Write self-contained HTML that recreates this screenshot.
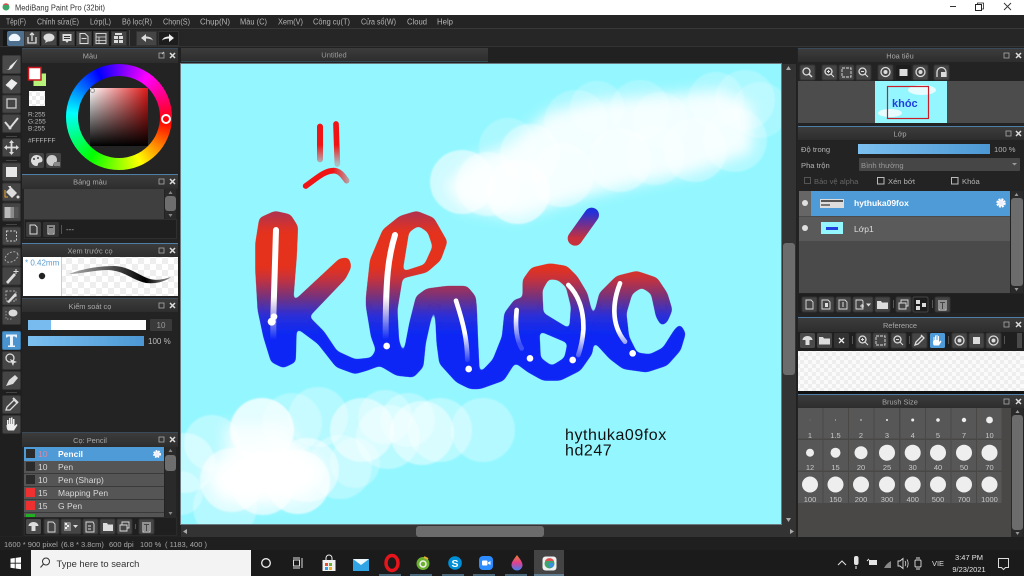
<!DOCTYPE html>
<html lang="vi"><head><meta charset="utf-8"><title>MediBang Paint Pro</title>
<style>
html,body{margin:0;padding:0;background:#222}
body{width:1024px;height:576px;overflow:hidden;position:relative;font-family:"Liberation Sans","Noto Sans CJK SC",sans-serif}
svg{position:absolute;left:0;top:0}
text{font-family:"Liberation Sans","Noto Sans CJK SC",sans-serif;fill:#b4b4b4;font-size:7.6px}
.m{text-anchor:middle}
.h{fill:#a8a8a8;font-size:7.4px;text-anchor:middle}
.l{fill:#d8d8d8;font-size:8.5px}
.s{fill:#c8c8c8;font-size:7.5px;text-anchor:middle}
.b{fill:#454545;stroke:#333}
.w{fill:#dcdcdc}
.o{fill:none;stroke:#dcdcdc;stroke-width:1.3}
.d{position:absolute}
</style></head><body>
<svg width="1024" height="576" viewBox="0 0 1024 576">
<defs>
<linearGradient id="hd" x1="0" y1="0" x2="0" y2="1"><stop offset="0" stop-color="#3c3c3c"/><stop offset="1" stop-color="#2d2d2d"/></linearGradient>
<linearGradient id="bar" x1="0" y1="0" x2="1" y2="0"><stop offset="0" stop-color="#7cc0f0"/><stop offset="1" stop-color="#4c98d4"/></linearGradient>
<pattern id="chk" width="8" height="8" patternUnits="userSpaceOnUse"><rect width="8" height="8" fill="#fff"/><rect width="4" height="4" fill="#ececec"/><rect x="4" y="4" width="4" height="4" fill="#ececec"/></pattern>
<pattern id="chk2" width="12" height="12" patternUnits="userSpaceOnUse"><rect width="12" height="12" fill="#fff"/><rect width="6" height="6" fill="#cfcfcf"/><rect x="6" y="6" width="6" height="6" fill="#cfcfcf"/></pattern>
<linearGradient id="stk" x1="0" y1="0" x2="1" y2="0"><stop offset="0" stop-color="#aaa"/><stop offset=".4" stop-color="#555"/><stop offset=".75" stop-color="#000"/><stop offset="1" stop-color="#999"/></linearGradient>
<linearGradient id="ink" gradientUnits="userSpaceOnUse" x1="0" y1="306" x2="0" y2="675">
<stop offset="0" stop-color="#ad3050"/><stop offset=".16" stop-color="#e4301f"/><stop offset=".455" stop-color="#e4301f"/><stop offset=".553" stop-color="#c03040"/><stop offset=".70" stop-color="#703080"/><stop offset=".84" stop-color="#2a2fd8"/><stop offset="1" stop-color="#0a28f5"/></linearGradient>
<linearGradient id="acc" gradientUnits="userSpaceOnUse" x1="0" y1="305" x2="0" y2="385"><stop offset="0" stop-color="#2030dc"/><stop offset="1" stop-color="#c8303c"/></linearGradient>
<linearGradient id="f1" gradientUnits="userSpaceOnUse" x1="0" y1="560" x2="0" y2="690"><stop offset="0" stop-color="#fff"/><stop offset="1" stop-color="#fff" stop-opacity="0"/></linearGradient>
<linearGradient id="f2" gradientUnits="userSpaceOnUse" x1="0" y1="620" x2="0" y2="700"><stop offset="0" stop-color="#fff"/><stop offset="1" stop-color="#fff" stop-opacity=".2"/></linearGradient>
<linearGradient id="f3" gradientUnits="userSpaceOnUse" x1="0" y1="670" x2="0" y2="755"><stop offset="0" stop-color="#fff"/><stop offset="1" stop-color="#fff" stop-opacity=".1"/></linearGradient>
<linearGradient id="f4" gradientUnits="userSpaceOnUse" x1="0" y1="660" x2="0" y2="740"><stop offset="0" stop-color="#fff"/><stop offset="1" stop-color="#fff" stop-opacity=".15"/></linearGradient>
<linearGradient id="dr1" gradientUnits="userSpaceOnUse" x1="0" y1="105" x2="0" y2="162"><stop offset="0" stop-color="#f01414"/><stop offset="1" stop-color="#f01414" stop-opacity=".25"/></linearGradient>
<linearGradient id="fr" gradientUnits="userSpaceOnUse" x1="280" y1="0" x2="328" y2="0"><stop offset="0" stop-color="#f01414"/><stop offset="1" stop-color="#f01414" stop-opacity=".35"/></linearGradient>
<linearGradient id="drop" x1="0" y1="0" x2="0" y2="1"><stop offset="0" stop-color="#f08030"/><stop offset=".5" stop-color="#e04090"/><stop offset="1" stop-color="#4080f0"/></linearGradient>
<clipPath id="cv"><rect x="181" y="64" width="600" height="460"/></clipPath>
<filter id="sm" x="-5%" y="-5%" width="110%" height="110%"><feGaussianBlur stdDeviation="7"/><feComponentTransfer><feFuncA type="linear" slope="9" intercept="-3.8"/></feComponentTransfer></filter>
<filter id="bl" x="-10%" y="-10%" width="120%" height="120%"><feGaussianBlur stdDeviation=".8"/></filter>
<filter id="core" x="-20%" y="-20%" width="140%" height="140%"><feGaussianBlur stdDeviation="7"/></filter>
</defs>

<!-- base -->
<rect width="1024" height="576" fill="#232323"/>
<rect width="1024" height="15" fill="#fff"/>
<circle cx="6" cy="7" r="3.5" fill="#3fa46a"/><path d="M3 5a3.5 3.5 0 0 1 6 0z" fill="#d85050"/>
<text x="15" y="10.5" textLength="90" lengthAdjust="spacingAndGlyphs" style="font-size:8.6px;fill:#333">MediBang Paint Pro (32bit)</text>
<path d="M950 6.5h6" stroke="#333"/><rect x="975.5" y="4.5" width="6" height="6" fill="none" stroke="#222"/><path d="M977.5 4.5v-1.5h6v6h-2" fill="none" stroke="#222" stroke-width=".8"/><path d="M1004 3l7 7M1011 3l-7 7" stroke="#333" stroke-width=".9"/>

<!-- menu -->
<rect y="15" width="1024" height="13" fill="#242424"/>
<g style="fill:#b8b8b8;font-size:8px"><text x="6" y="24.5" textLength="20" lengthAdjust="spacingAndGlyphs" style="font-size:8px">Tệp(F)</text><text x="37" y="24.5" textLength="42" lengthAdjust="spacingAndGlyphs" style="font-size:8px">Chỉnh sửa(E)</text><text x="90" y="24.5" textLength="21" lengthAdjust="spacingAndGlyphs" style="font-size:8px">Lớp(L)</text><text x="122" y="24.5" textLength="30" lengthAdjust="spacingAndGlyphs" style="font-size:8px">Bộ lọc(R)</text><text x="163" y="24.5" textLength="27" lengthAdjust="spacingAndGlyphs" style="font-size:8px">Chọn(S)</text><text x="200" y="24.5" textLength="30" lengthAdjust="spacingAndGlyphs" style="font-size:8px">Chụp(N)</text><text x="240" y="24.5" textLength="27" lengthAdjust="spacingAndGlyphs" style="font-size:8px">Màu (C)</text><text x="278" y="24.5" textLength="25" lengthAdjust="spacingAndGlyphs" style="font-size:8px">Xem(V)</text><text x="313" y="24.5" textLength="37" lengthAdjust="spacingAndGlyphs" style="font-size:8px">Công cụ(T)</text><text x="361" y="24.5" textLength="35" lengthAdjust="spacingAndGlyphs" style="font-size:8px">Cửa sổ(W)</text><text x="407" y="24.5" textLength="20" lengthAdjust="spacingAndGlyphs" style="font-size:8px">Cloud</text><text x="437" y="24.5" textLength="16" lengthAdjust="spacingAndGlyphs" style="font-size:8px">Help</text></g>
<rect y="28" width="1024" height="1" fill="#383838"/>
<rect y="29" width="1024" height="18" fill="#262626"/>
<rect y="46" width="1024" height="1" fill="#333"/>
<rect x="3" y="30" width="124" height="16" fill="#161616"/>
<rect x="7" y="31" width="18" height="15" rx="2" fill="#4e6f8e"/>
<path d="M10 41a3 3 0 0 1 0-5 5 4 0 0 1 9 0 3 3 0 0 1 0 5z" fill="#f0f6ff"/>
<rect x="24.5" y="31.5" width="15" height="14" class="b"/><path d="M28 37h-0v6h8v-6M32 41v-8m-2 2l2-2 2 2" class="o"/>
<rect x="41.5" y="31.5" width="15" height="14" class="b"/><ellipse cx="49" cy="37.5" rx="5.5" ry="4" class="w"/><path d="M46 40l-1 3 4-2z" class="w"/>
<rect x="59.5" y="31.5" width="15" height="14" class="b"/><path d="M62.5 34h9v7h-3l-1.5 2-1.5-2h-3z" class="w"/><path d="M64 36.5h6M64 38.5h6" stroke="#333"/>
<rect x="76.5" y="31.5" width="15" height="14" class="b"/><path d="M80 33.5h5l3 3v7h-8z" class="o" style="stroke-width:1"/><path d="M81.5 38.5h5" stroke="#ddd"/>
<rect x="93.5" y="31.5" width="15" height="14" class="b"/><rect x="96" y="33.5" width="10" height="10" class="o" style="stroke-width:.9"/><path d="M96 37h10M96 40.5h10M99 37v7" stroke="#ddd" stroke-width=".8"/>
<rect x="111.5" y="31.5" width="15" height="14" class="b"/><path d="M114 36h4v3h-4zM119 36h4v3h-4zM114 40h4v3h-4zM119 40h4v3h-4zM115 33h7v2h-7z" class="w"/>
<rect x="129" y="30" width="1" height="16" fill="#444"/>
<rect x="136.5" y="31.5" width="20" height="14" class="b"/><path d="M141 38l5-4v2.5c3 0 6 1 7 4-2-1.5-4-2-7-2v3.5z" class="w"/>
<rect x="158.5" y="31.5" width="20" height="14" fill="#1d1d1d" stroke="#333"/><path d="M174 38l-5-4v2.5c-3 0-6 1-7 4 2-1.5 4-2 7-2v3.5z" fill="#f0f0f0"/>

<!-- left tool column -->
<rect y="47" width="22" height="489" fill="#1f1f1f"/>
<g>
<rect x="2.5" y="55.5" width="18" height="18" rx="1.5" fill="#4a4a4a" stroke="#383838"/><path d="M6 70c3 0 3-2 4-4l8-7-6 9c-2 2-4 2-6 2z" fill="#e8e8e8"/>
<rect x="2.5" y="75.5" width="18" height="18" rx="1.5" class="b"/><path d="M5.5 85l6-6 6 4-6 7z" fill="#eee"/><path d="M8 87l3 3" stroke="#777"/>
<rect x="2.5" y="95" width="18" height="18" rx="1.5" class="b"/><rect x="7" y="99" width="9" height="9" class="o" style="stroke:#ccc"/>
<rect x="2.5" y="114.5" width="18" height="18" rx="1.5" class="b"/><path d="M5 122l5 6 8-10" class="o" style="stroke-width:2"/><circle cx="10" cy="128" r="1.5" class="w"/>
<rect x="6" y="136" width="11" height="1" fill="#444"/>
<rect x="2.5" y="138.5" width="18" height="18" rx="1.5" class="b"/><path d="M11.5 141v13M5 147.5h13" stroke="#ddd" stroke-width="1.8"/><path d="M11.5 140l-2.5 3h5zM11.5 155l-2.5-3h5zM4 147.5l3-2.5v5zM19 147.5l-3-2.5v5z" class="w"/>
<rect x="6" y="160" width="11" height="1" fill="#444"/>
<rect x="2.5" y="163" width="18" height="18" rx="1.5" class="b"/><rect x="6" y="167" width="11" height="10" fill="#e8e8e8"/>
<rect x="2.5" y="183" width="18" height="18" rx="1.5" class="b"/><path d="M6 192l5-5 6 6-5 5zM8 186l3 0 0 4" fill="#ddd"/><path d="M5 190v7h3" stroke="#f0a830" fill="none"/><circle cx="18" cy="197" r="1.5" fill="#ddd"/>
<rect x="2.5" y="203" width="18" height="18" rx="1.5" class="b"/><rect x="4.5" y="207" width="14" height="11" fill="#8a8a8a"/><rect x="4.5" y="207" width="6" height="11" fill="#bbb"/><rect x="14" y="207" width="4.5" height="11" fill="#555"/>
<rect x="6" y="224" width="11" height="1" fill="#444"/>
<rect x="2.5" y="227" width="18" height="18" rx="1.5" class="b"/><rect x="6.5" y="231" width="10" height="10" fill="none" stroke="#ccc" stroke-dasharray="2 1.5"/>
<rect x="2.5" y="248" width="18" height="18" rx="1.5" class="b"/><ellipse cx="11.5" cy="257" rx="7" ry="4.5" fill="none" stroke="#aaa" stroke-dasharray="2 1.5" transform="rotate(-30 11.5 257)"/>
<rect x="2.5" y="267" width="18" height="18" rx="1.5" class="b"/><path d="M6 282l8-9 2 2-8 9z" class="w"/><path d="M16 269v5M13.5 271.5h5" stroke="#ddd"/>
<rect x="2.5" y="287" width="18" height="18" rx="1.5" class="b"/><rect x="6" y="291" width="10" height="10" fill="none" stroke="#aaa" stroke-dasharray="2 1.5"/><path d="M7 302l8-9 2 2-8 8z" class="w"/>
<rect x="2.5" y="306.5" width="18" height="18" rx="1.5" class="b"/><ellipse cx="13" cy="313" rx="4.5" ry="3.5" class="w"/><path d="M6 311v8h7" fill="none" stroke="#999" stroke-dasharray="1.5 1.5"/>
<rect x="2.5" y="331.5" width="18" height="18" rx="1.5" fill="#4a94d0" stroke="#3a78a8"/><path d="M6 334.5h11v3h-1l-1-1h-2v9h2v1.5h-7v-1.5h2v-9h-2l-1 1h-1z" fill="#eaf4ff"/>
<rect x="2.5" y="351.5" width="18" height="18" rx="1.5" class="b"/><circle cx="10" cy="358" r="4" class="o"/><path d="M10 359l7 3-3 1-1 3z" class="w"/>
<rect x="2.5" y="371.5" width="18" height="18" rx="1.5" class="b"/><path d="M6 386l3-6 6-5 3 3-5 6z" class="w"/>
<rect x="6" y="392" width="11" height="1" fill="#444"/>
<rect x="2.5" y="395.5" width="18" height="18" rx="1.5" class="b"/><path d="M6 410l1-3 7-7 3 3-7 7z" fill="none" stroke="#ddd" stroke-width="1.3"/><path d="M13 398l5 5" stroke="#ddd" stroke-width="2"/>
<rect x="2.5" y="415.5" width="18" height="18" rx="1.5" class="b"/><path d="M7 425v-5h1.5v4h.5v-6h1.5v6h.5v-6.5h1.5v6.5h.5v-5h1.5v7l2-2 1 1-3.5 5.5h-6c-1-1-1.5-3-1.5-5.5z" fill="#eee"/>
</g>

<!-- left panels -->
<rect x="22" y="48" width="156" height="488" fill="#232323"/>
<rect x="22" y="48" width="156" height="1" fill="#3a4a58"/>
<rect x="22" y="49" width="156" height="14" fill="url(#hd)"/>
<text class="h" x="90" y="58.5">Màu</text>
<rect x="159" y="53" width="5" height="5" fill="none" stroke="#aaa" stroke-width=".8"/><path d="M164 52l-2 2" stroke="#ccc"/><path d="M170 53l5 5M175 53l-5 5" stroke="#ddd" stroke-width="1.5"/>
<rect x="33.5" y="73.5" width="12.5" height="12.5" fill="#b8f47a"/>
<rect x="28.5" y="67.5" width="12.5" height="12.5" fill="#fff" stroke="#c8161c" stroke-width="1.5"/>
<rect x="29" y="91" width="16" height="15" fill="url(#chk)"/>
<text x="28" y="116.5" style="font-size:6.5px;fill:#bbb">R:255</text><text x="28" y="123.5" style="font-size:6.5px;fill:#bbb">G:255</text><text x="28" y="130.5" style="font-size:6.5px;fill:#bbb">B:255</text>
<text x="28" y="142.5" style="font-size:6.5px;fill:#bbb">#FFFFFF</text>
<rect x="29" y="153" width="15" height="15" rx="2" fill="#444"/><path d="M36.5 155a5.5 5.5 0 1 0 0 11c2 0 1-2 2-3s4 0 4-3c0-3-3-5-6-5z" class="w"/><circle cx="34" cy="159" r="1" fill="#444"/><circle cx="38" cy="158" r="1" fill="#444"/>
<rect x="46" y="153" width="15" height="15" rx="2" fill="#444"/><path d="M52 155a5.5 5.5 0 1 0 0 11c2 0 1-2 2-3s3 0 3-3c0-3-2-5-5-5z" fill="#ccc"/><rect x="54" y="162" width="6" height="4" fill="#888"/>

<rect x="22" y="174" width="156" height="1" fill="#4f7ea6"/>
<rect x="22" y="175" width="156" height="14" fill="url(#hd)"/>
<text class="h" x="90" y="184.5">Bảng màu</text>
<rect x="159" y="179" width="5" height="5" fill="none" stroke="#aaa" stroke-width=".8"/><path d="M170 179l5 5M175 179l-5 5" stroke="#ddd" stroke-width="1.5"/>
<rect x="24" y="189" width="140" height="30" fill="#3f3f3f"/>
<rect x="165" y="189" width="11" height="30" fill="#2a2a2a"/><rect x="165" y="196" width="11" height="15" rx="3" fill="#6e6e6e"/><path d="M170.5 191l-2 3h4zM170.5 217l-2-3h4z" fill="#888"/>
<rect x="24.5" y="219.5" width="152" height="19" fill="#1f1f1f" stroke="#2f2f2f"/>
<rect x="26" y="222" width="15" height="15" rx="1.5" fill="#3d3d3d"/><path d="M30 225h5l2 2v7h-7z" class="o" style="stroke-width:1"/>
<rect x="43" y="222" width="16" height="15" rx="1.5" fill="#333"/><path d="M47 226h8M48 227v7h6v-7M50 228v5M52 228v5" stroke="#ddd" fill="none"/>
<rect x="61" y="225" width="1" height="9" fill="#555"/><text x="66" y="232" style="font-size:8px">---</text>

<rect x="22" y="243" width="156" height="1" fill="#4f7ea6"/>
<rect x="22" y="244" width="156" height="13" fill="url(#hd)"/>
<text class="h" x="90" y="253.5">Xem trước cọ</text>
<rect x="159" y="248" width="5" height="5" fill="none" stroke="#aaa" stroke-width=".8"/><path d="M170 248l5 5M175 248l-5 5" stroke="#ddd" stroke-width="1.5"/>
<rect x="23" y="257" width="155" height="39" fill="#fff"/>
<rect x="62" y="257" width="116" height="39" fill="url(#chk2)" opacity=".35"/><rect x="61" y="257" width="1" height="39" fill="#ccc"/>
<text x="25" y="265.5" style="font-size:8px;fill:#5c9ccc">* 0.42mm</text>
<circle cx="42" cy="276" r="3.2" fill="#222"/>
<path d="M69 274C85 268 100 266 115 266 130 267 140 276 150 279 158 281 164 279 171 277 165 282 155 284 146 283 130 279 125 271 108 270 95 270 80 274 69 274z" fill="url(#stk)"/>

<rect x="22" y="298" width="156" height="1" fill="#3a4a58"/>
<rect x="22" y="299" width="156" height="13" fill="url(#hd)"/>
<text class="h" x="90" y="309">Kiểm soát cọ</text>
<rect x="159" y="303" width="5" height="5" fill="none" stroke="#aaa" stroke-width=".8"/><path d="M170 303l5 5M175 303l-5 5" stroke="#ddd" stroke-width="1.5"/>
<rect x="28" y="320" width="118" height="10" fill="#fff"/><rect x="28" y="320" width="23" height="10" fill="#78bbee"/>
<rect x="150" y="319" width="22" height="12" rx="1" fill="#3a3a3a"/><text x="161" y="328" class="m" style="font-size:8px;fill:#999">10</text>
<rect x="28" y="336" width="116" height="10" fill="url(#bar)"/>
<text x="148" y="344" style="font-size:8px;fill:#bbb">100 %</text>

<rect x="22" y="432" width="156" height="1" fill="#3a4a58"/>
<rect x="22" y="433" width="156" height="14" fill="url(#hd)"/>
<text class="h" x="90" y="443">Cọ: Pencil</text>
<rect x="159" y="437" width="5" height="5" fill="none" stroke="#aaa" stroke-width=".8"/><path d="M170 437l5 5M175 437l-5 5" stroke="#ddd" stroke-width="1.5"/>
<rect x="24" y="447" width="140" height="70" fill="#555"/>
<rect x="24" y="447" width="140" height="14" fill="#4f9bd8"/>
<path d="M24 473.5h140M24 486.5h140M24 499.5h140M24 512.5h140" stroke="#3a3a3a"/>
<rect x="26" y="449" width="9" height="9" fill="#2b2b2b"/><rect x="26" y="462" width="9" height="9" fill="#2b2b2b"/><rect x="26" y="475" width="9" height="9" fill="#2b2b2b"/><rect x="26" y="488" width="9" height="9" fill="#f03030"/><rect x="26" y="501" width="9" height="9" fill="#f03030"/><rect x="26" y="514" width="9" height="3" fill="#20b020"/>
<text x="38" y="457" style="font-size:8.5px;fill:#d88aa0">10</text><text x="58" y="457" style="font-size:8.5px;fill:#fff;font-weight:bold">Pencil</text>
<text x="38" y="470" class="l">10</text><text x="58" y="470" class="l">Pen</text>
<text x="38" y="483" class="l">10</text><text x="58" y="483" class="l">Pen (Sharp)</text>
<text x="38" y="496" class="l">15</text><text x="58" y="496" class="l">Mapping Pen</text>
<text x="38" y="509" class="l">15</text><text x="58" y="509" class="l">G Pen</text>
<circle cx="157" cy="454" r="3" fill="#eef" stroke="#fff" stroke-width="2" stroke-dasharray="1.5 1"/>
<rect x="165" y="447" width="11" height="70" fill="#2a2a2a"/><rect x="165" y="455" width="11" height="16" rx="3" fill="#6e6e6e"/><path d="M170.5 449l-2 3h4zM170.5 515l-2-3h4z" fill="#888"/>
<rect x="24.5" y="517.5" width="152" height="18" fill="#1f1f1f" stroke="#2a2a2a"/>
<rect x="26" y="519" width="15" height="15" rx="1.5" fill="#4a4a4a"/><path d="M33.5 522c-3 0-5 2-5 4h3v5h4v-5h3c0-2-2-4-5-4z" class="w"/>
<rect x="44" y="519" width="15" height="15" rx="1.5" class="b"/><path d="M48 522h5l2 2v8h-7z" class="o" style="stroke-width:.9"/>
<rect x="61" y="519" width="20" height="15" rx="1.5" class="b"/><path d="M64 522h6l1 1v8h-7z" fill="#888"/><path d="M65 523h2v2h-2zM67 525h2v2h-2zM65 527h2v2h-2z" fill="#eee"/><path d="M73 525h5l-2.5 3z" class="w"/>
<rect x="83" y="519" width="15" height="15" rx="1.5" class="b"/><path d="M86 522h7l1 2v8h-8z" class="o" style="stroke-width:.9"/><path d="M88 526h3M88 529h3" stroke="#ddd"/>
<rect x="100" y="519" width="15" height="15" rx="1.5" class="b"/><path d="M103 523h4l1 1.5h5v6.5h-10z" class="w"/>
<rect x="117" y="519" width="15" height="15" rx="1.5" class="b"/><path d="M120 525h7v6h-7zM122 525v-3h7v6h-2" class="o" style="stroke-width:.9"/>
<rect x="135" y="524" width="1" height="5" fill="#555"/>
<rect x="139" y="519" width="15" height="15" rx="1.5" class="b"/><path d="M142 523h9M143 524v8h7v-8M145 525v6M148 525v6" stroke="#ddd" fill="none"/>

<!-- canvas region -->
<rect x="178" y="47" width="620" height="489" fill="#212121"/>
<rect x="181" y="48" width="307" height="13" fill="url(#hd)"/>
<rect x="181" y="61" width="307" height="1" fill="#2f4a50"/>
<text x="334" y="57.5" class="m" style="font-size:7.5px;fill:#9a9a9a">Untitled</text>
<rect x="180" y="63" width="602" height="462" fill="#6a7a80"/>
<rect x="181" y="64" width="600" height="460" fill="#94f7ff"/>

<g clip-path="url(#cv)">
<g fill="#fff" filter="url(#bl)">
<circle cx="462" cy="182" r="32" opacity=".55"/><circle cx="508" cy="147" r="29" opacity=".22"/><circle cx="530" cy="154" r="30" opacity=".35"/><circle cx="518" cy="192" r="32" opacity=".6"/><circle cx="576" cy="122" r="32" opacity=".22"/><circle cx="597" cy="108" r="27" opacity=".2"/><circle cx="640" cy="110" r="30" opacity=".2"/><circle cx="620" cy="160" r="32" opacity=".35"/><circle cx="562" cy="175" r="32" opacity=".4"/><circle cx="695" cy="150" r="32" opacity=".3"/><circle cx="716" cy="100" r="28" opacity=".22"/><circle cx="745" cy="100" r="30" opacity=".22"/><circle cx="760" cy="110" r="28" opacity=".2"/><circle cx="735" cy="140" r="32" opacity=".25"/><circle cx="655" cy="155" r="30" opacity=".25"/><circle cx="488" cy="184" r="32" opacity=".4"/><circle cx="660" cy="120" r="28" opacity=".2"/>
<circle cx="212" cy="443" r="28" opacity=".35"/><circle cx="185" cy="463" r="30" opacity=".4"/><circle cx="181" cy="493" r="22" opacity=".3"/><circle cx="225" cy="507" r="32" opacity=".3"/><circle cx="318" cy="417" r="30" opacity=".3"/><circle cx="292" cy="423" r="30" opacity=".25"/><circle cx="362" cy="430" r="32" opacity=".5"/><circle cx="385" cy="417" r="27" opacity=".3"/><circle cx="408" cy="420" r="27" opacity=".3"/><circle cx="388" cy="437" r="32" opacity=".35"/><circle cx="422" cy="433" r="32" opacity=".45"/><circle cx="440" cy="430" r="32" opacity=".35"/><circle cx="483" cy="430" r="32" opacity=".3"/><circle cx="340" cy="467" r="32" opacity=".3"/><circle cx="355" cy="463" r="25" opacity=".25"/><circle cx="262" cy="430" r="32" opacity=".75"/>
</g>
<g fill="#fff" filter="url(#core)">
<path d="M445 186 470 160 510 145 548 112 600 100 660 95 720 90 752 105 752 152 695 172 628 186 565 202 515 218 462 208Z" opacity=".85"/>
<path d="M205 470 240 450 300 445 325 470 310 495 265 505 220 500Z"/>
<path d="M225 425 290 425 300 460 225 465Z" opacity=".7"/>
</g>
<g fill="#fff" filter="url(#bl)">
<circle cx="232" cy="480" r="32" opacity=".55"/><circle cx="263" cy="483" r="32" opacity=".6"/><circle cx="298" cy="482" r="32" opacity=".65"/><circle cx="307" cy="470" r="32" opacity=".5"/>
</g>
</g>

<g transform="translate(240 110) scale(.33333)">
<g filter="url(#sm)">
<path fill-rule="evenodd" fill="url(#ink)" stroke="url(#ink)" stroke-width="4" stroke-linejoin="round" d="M60 325 105 305 150 315 172 350 168 440 157 580 300 447 325 445 332 470 315 505 205 620 250 665 290 725 345 750 395 745 410 720 395 680 380 590 380 560 392 450 430 360 480 320 530 305 580 325 620 395 600 450 560 485 486 503 470 600 475 690 490 745 510 640 530 560 560 538 620 530 680 530 705 560 708 590 712 690 717 795 760 750 788 680 795 610 825 570 850 565 850 510 875 475 930 462 980 470 1010 500 1040 550 1055 610 1060 680 1065 685 1065 610 1080 550 1130 500 1190 485 1250 505 1280 550 1295 600 1280 635 1265 645 1250 620 1235 550 1205 530 1175 550 1157 610 1165 680 1190 730 1230 735 1270 715 1305 660 1320 645 1335 670 1320 720 1280 765 1220 785 1150 775 1110 745 1060 690 1055 730 1020 780 960 810 910 810 865 785 825 755 790 810 720 835 690 835 650 815 600 760 592 700 585 565 555 700 548 770 520 800 470 795 420 765 380 780 345 790 290 770 235 700 168 650 165 755 130 772 95 755 72 680 55 600 48 480 48 400Z M535 345 505 365 485 488 555 465 580 410 565 365Z M925 505 905 540 908 610 990 660 995 590 980 530 955 508Z M896 660 985 698 975 745 935 770 900 745Z"/>
<path fill="url(#ink)" d="M60 325 105 305 150 315 172 350 168 440 157 600 168 650 165 755 130 772 95 755 72 680 55 600 48 480 48 400Z"/>
</g>
<path d="M1055 315 1005 385" stroke="url(#acc)" stroke-width="44" stroke-linecap="round" fill="none"/>
<g fill="none" stroke-linecap="round">
<path d="M108 360 100 620 100 685" stroke="url(#f1)" stroke-width="18"/>
<path d="M465 375C445 440 437 500 437 680" stroke="url(#f1)" stroke-width="18"/>
<path d="M648 572C670 640 682 690 682 750" stroke="url(#f3)" stroke-width="14"/>
<path d="M830 600C825 650 830 690 845 715" stroke="url(#f2)" stroke-width="14"/>
<path d="M985 525C1020 560 1032 610 1030 660 1028 690 1020 720 1015 735" stroke="url(#f3)" stroke-width="14"/>
<path d="M1140 520C1120 570 1110 640 1155 695" stroke="url(#f4)" stroke-width="14"/>
<path d="M240 50 240 148" stroke="url(#dr1)" stroke-width="18"/>
<path d="M288 42 292 162" stroke="url(#dr1)" stroke-width="17"/>
<path d="M197 228C230 205 255 180 285 182 300 184 310 198 320 212" stroke="url(#fr)" stroke-width="17"/>
</g>
<g fill="#fff"><circle cx="95" cy="635" r="12"/><circle cx="102" cy="620" r="10"/><circle cx="440" cy="708" r="10"/><circle cx="686" cy="777" r="10"/><circle cx="870" cy="745" r="10"/><circle cx="998" cy="750" r="10"/><circle cx="1178" cy="730" r="10"/></g>
</g>
<text x="565" y="440" style="font-size:16px;letter-spacing:.55px;fill:#111">hythuka09fox</text>
<text x="565" y="455.5" style="font-size:16px;letter-spacing:.55px;fill:#111">hd247</text>

<!-- scrollbars -->
<rect x="782" y="64" width="14" height="461" fill="#333"/>
<rect x="783" y="243" width="12" height="132" rx="3" fill="#6c6c6c"/>
<path d="M788.5 66l-2.5 4h5z" fill="#aaa"/><path d="M788.5 522l-2.5-4h5z" fill="#aaa"/>
<rect x="181" y="525" width="615" height="13" fill="#333"/>
<rect x="416" y="526" width="128" height="11" rx="3" fill="#6c6c6c"/>
<path d="M183 531.5l4-2.5v5z" fill="#aaa"/><path d="M794 531.5l-4-2.5v5z" fill="#aaa"/>

<!-- right panels -->
<rect x="797" y="47" width="227" height="489" fill="#232323"/>
<rect x="798" y="48" width="226" height="1" fill="#3a4a58"/>
<rect x="798" y="49" width="226" height="13" fill="url(#hd)"/>
<text class="h" x="900" y="58.5">Hoa tiêu</text>
<rect x="1004" y="53" width="5" height="5" fill="none" stroke="#aaa" stroke-width=".8"/><path d="M1016 53l5 5M1021 53l-5 5" stroke="#ddd" stroke-width="1.5"/>
<g>
<rect x="800" y="65" width="15" height="15" rx="1.5" class="b"/><circle cx="806.5" cy="71.5" r="3.5" class="o"/><path d="M809 74l3 3" stroke="#ddd" stroke-width="1.5"/>
<rect x="822" y="65" width="15" height="15" rx="1.5" class="b"/><circle cx="828.5" cy="71.5" r="3.5" class="o"/><path d="M831 74l3 3M827 71.5h3M828.5 70v3" stroke="#ddd"/>
<rect x="839" y="65" width="15" height="15" rx="1.5" class="b"/><rect x="842" y="68" width="9" height="9" class="o" style="stroke-width:.9;stroke-dasharray:3 1"/>
<rect x="856" y="65" width="15" height="15" rx="1.5" class="b"/><circle cx="862.5" cy="71.5" r="3.5" class="o"/><path d="M865 74l3 3M861 71.5h3" stroke="#ddd"/>
<rect x="878" y="65" width="15" height="15" rx="1.5" class="b"/><circle cx="885.5" cy="72" r="4.5" class="o"/><circle cx="885.5" cy="72" r="2" class="w"/>
<rect x="896" y="65" width="15" height="15" rx="1.5" fill="#1d1d1d"/><rect x="899.5" y="69" width="8" height="7" class="w"/>
<rect x="913" y="65" width="15" height="15" rx="1.5" class="b"/><circle cx="920.5" cy="72" r="4.5" class="o"/><circle cx="920.5" cy="72" r="2" class="w"/>
<rect x="934" y="65" width="15" height="15" rx="1.5" class="b"/><path d="M937 77v-5a4.5 4.5 0 0 1 9 0v5" class="o"/><rect x="941" y="72" width="5" height="5" class="w"/>
</g>
<rect x="798" y="81" width="226" height="42" fill="#4c4c4c"/>
<rect x="875" y="81" width="72" height="42" fill="#94f7ff"/>
<ellipse cx="922" cy="90" rx="14" ry="5" fill="#e6fcff"/><ellipse cx="890" cy="113" rx="12" ry="4" fill="#e6fcff"/>
<rect x="887.5" y="86.5" width="41" height="32" fill="none" stroke="#c81e28" stroke-width="1.2"/>
<text x="892" y="107" style="font-size:11px;font-weight:bold;fill:#2040e0">khóc</text>
<rect x="798" y="126" width="226" height="1" fill="#4f7ea6"/>
<rect x="798" y="127" width="226" height="13" fill="url(#hd)"/>
<text class="h" x="900" y="136.5">Lớp</text>
<rect x="1006" y="131" width="5" height="5" fill="none" stroke="#aaa" stroke-width=".8"/><path d="M1016 131l5 5M1021 131l-5 5" stroke="#ddd" stroke-width="1.5"/>
<text x="801" y="152">Độ trong</text>
<rect x="858" y="144" width="132" height="10" fill="url(#bar)"/>
<text x="994" y="152">100 %</text>
<text x="801" y="168">Pha trộn</text>
<rect x="859" y="158" width="161" height="13" rx="1" fill="#464646"/>
<text x="861" y="168" style="fill:#999">Bình thường</text><path d="M1012 163h5l-2.5 2.5z" fill="#999"/>
<rect x="804.5" y="177.5" width="6" height="6" fill="none" stroke="#555"/><text x="814" y="184" style="fill:#666">Bảo vệ alpha</text>
<rect x="877.5" y="177.5" width="6.5" height="6.5" fill="none" stroke="#bbb"/><text x="888" y="184">Xén bớt</text>
<rect x="951.5" y="177.5" width="6.5" height="6.5" fill="none" stroke="#bbb"/><text x="962" y="184">Khóa</text>
<rect x="799" y="191" width="211" height="102" fill="#4a4a4a"/>
<rect x="799" y="191" width="12" height="25" fill="#666"/><rect x="811" y="191" width="199" height="25" fill="#4f9bd8"/>
<rect x="799" y="217" width="211" height="24" fill="#5a5a5a"/>
<circle cx="805" cy="203" r="3" fill="#e0e0e0"/><circle cx="805" cy="228" r="3" fill="#e0e0e0"/>
<rect x="820" y="199" width="24" height="9" fill="#ddd"/><rect x="821" y="200" width="22" height="2" fill="#555"/><rect x="821" y="204" width="9" height="2" fill="#777"/>
<text x="854" y="206" style="font-size:8.5px;fill:#fff;font-weight:bold">hythuka09fox</text>
<circle cx="1001" cy="203" r="3.5" fill="#eef" stroke="#fff" stroke-width="2.5" stroke-dasharray="1.8 1"/>
<rect x="821" y="222" width="22" height="12" fill="#94f7ff"/><rect x="826" y="227" width="12" height="3" fill="#2040e0"/>
<text x="854" y="232" style="font-size:8.5px;fill:#ddd">Lớp1</text>
<rect x="1011" y="191" width="12" height="102" fill="#2a2a2a"/><rect x="1011" y="198" width="12" height="88" rx="3" fill="#6c6c6c"/><path d="M1016.5 193l-2 3h4zM1016.5 291l-2-3h4z" fill="#999"/>
<rect x="798" y="294" width="226" height="19" fill="#1f1f1f"/>
<g>
<rect x="802" y="297" width="15" height="15" rx="1.5" class="b"/><path d="M806 300h5l2 2v7h-7z" class="o" style="stroke-width:.9"/>
<rect x="819" y="297" width="15" height="15" rx="1.5" class="b"/><path d="M822 300h6l2 2v7h-8z" class="o" style="stroke-width:.9"/><rect x="825" y="303" width="3" height="4" class="w"/>
<rect x="836" y="297" width="15" height="15" rx="1.5" class="b"/><path d="M839 300h6l2 2v7h-8z" class="o" style="stroke-width:.9"/><path d="M843 302v5" stroke="#ddd"/>
<rect x="853" y="297" width="20" height="15" rx="1.5" class="b"/><path d="M856 300h6l1 1v8h-7zM860 306h4M862 304v4" class="o" style="stroke-width:.9"/><path d="M866 303.5h5l-2.5 3z" class="w"/>
<rect x="875" y="297" width="15" height="15" rx="1.5" class="b"/><path d="M877 301h4l1 1.5h6v6.5h-11z" class="w"/>
<rect x="893" y="300" width="1" height="8" fill="#555"/>
<rect x="896" y="297" width="15" height="15" rx="1.5" class="b"/><path d="M899 303h7v6h-7zM901 303v-3h7v6h-2" class="o" style="stroke-width:.9"/>
<rect x="913" y="297" width="15" height="15" rx="1.5" fill="#1d1d1d" stroke="#444"/><path d="M916 300h4v4h-4zM916 306h4v4h-4zM922 303h4v4h-4z" class="w"/>
<rect x="932" y="300" width="1" height="8" fill="#555"/>
<rect x="935" y="297" width="15" height="15" rx="1.5" class="b"/><path d="M938 301h9M939 302v8h7v-8M941 303v6M944 303v6" stroke="#ddd" fill="none"/>
</g>

<rect x="798" y="317" width="226" height="1" fill="#4f7ea6"/>
<rect x="798" y="318" width="226" height="14" fill="url(#hd)"/>
<text class="h" x="900" y="328">Reference</text>
<rect x="1004" y="322" width="5" height="5" fill="none" stroke="#aaa" stroke-width=".8"/><path d="M1016 322l5 5M1021 322l-5 5" stroke="#ddd" stroke-width="1.5"/>
<rect x="798" y="332" width="226" height="19" fill="#1f1f1f"/>
<g>
<rect x="800" y="333" width="15" height="15" rx="1.5" fill="#4a4a4a"/><path d="M807.5 336c-3 0-5 2-5 4h3v5h4v-5h3c0-2-2-4-5-4z" class="w"/>
<rect x="817" y="333" width="15" height="15" rx="1.5" fill="#444"/><path d="M819 337h4l1 1.5h6v6h-11z" class="w"/>
<rect x="834" y="333" width="15" height="15" rx="1.5" fill="#333"/><path d="M839 338l5 5M844 338l-5 5" stroke="#eee" stroke-width="1.3"/>
<rect x="852" y="336" width="1" height="8" fill="#555"/>
<rect x="856" y="333" width="15" height="15" rx="1.5" class="b"/><circle cx="862.5" cy="339.5" r="3.5" class="o"/><path d="M865 342l3 3M861 339.5h3M862.5 338v3" stroke="#ddd"/>
<rect x="873" y="333" width="15" height="15" rx="1.5" class="b"/><rect x="876" y="336" width="9" height="9" class="o" style="stroke-width:.9;stroke-dasharray:3 1"/>
<rect x="891" y="333" width="15" height="15" rx="1.5" class="b"/><circle cx="897.5" cy="339.5" r="3.5" class="o"/><path d="M900 342l3 3M896 339.5h3" stroke="#ddd"/>
<rect x="909" y="336" width="1" height="8" fill="#555"/>
<rect x="912" y="333" width="15" height="15" rx="1.5" class="b"/><path d="M915 345l1-3 6-6 2 2-6 6zM921 335l3 3" fill="none" stroke="#ddd" stroke-width="1.3"/>
<rect x="930" y="333" width="15" height="15" rx="1.5" fill="#4f9bd8"/><path d="M933.5 340v-3h1v3h.5v-4.5h1v4.5h.5v-5h1v5h.5v-4h1v6l1.5-1.5 1 1-2.5 4h-5c-1-1-1.5-3-.5-5z" fill="#fff"/>
<rect x="948" y="336" width="1" height="8" fill="#555"/>
<rect x="952" y="333" width="15" height="15" rx="1.5" class="b"/><circle cx="959.5" cy="340.5" r="4.5" class="o"/><circle cx="959.5" cy="340.5" r="2" class="w"/>
<rect x="969" y="333" width="15" height="15" rx="1.5" class="b"/><rect x="973" y="337" width="7" height="7" class="w"/>
<rect x="986" y="333" width="15" height="15" rx="1.5" class="b"/><circle cx="993.5" cy="340.5" r="4.5" class="o"/><circle cx="993.5" cy="340.5" r="2" class="w"/>
<rect x="1004" y="336" width="1" height="8" fill="#555"/>
<rect x="1017" y="333" width="5" height="15" fill="#4a4a4a"/>
</g>
<rect x="798" y="351" width="226" height="40" fill="#f2f2f2"/>
<rect x="798" y="351" width="226" height="40" fill="url(#chk)" opacity=".6"/>
<rect x="798" y="391" width="226" height="3" fill="#111"/>
<rect x="798" y="394" width="226" height="1" fill="#4f7ea6"/>
<rect x="798" y="395" width="226" height="13" fill="url(#hd)"/>
<text class="h" x="900" y="404.5">Brush Size</text>
<rect x="1004" y="399" width="5" height="5" fill="none" stroke="#aaa" stroke-width=".8"/><path d="M1016 399l5 5M1021 399l-5 5" stroke="#ddd" stroke-width="1.5"/>
<rect x="798" y="408" width="213" height="129" fill="#4a4846"/>
<g fill="#575757">
<rect x="798" y="408" width="24.5" height="30.5"/><rect x="823.5" y="408" width="24.5" height="30.5"/><rect x="849" y="408" width="24.5" height="30.5"/><rect x="874.5" y="408" width="24.5" height="30.5"/><rect x="900.5" y="408" width="24.5" height="30.5"/><rect x="926" y="408" width="24.5" height="30.5"/><rect x="951.5" y="408" width="24.5" height="30.5"/><rect x="977" y="408" width="24.5" height="30.5"/>
<rect x="798" y="440" width="24.5" height="30.5"/><rect x="823.5" y="440" width="24.5" height="30.5"/><rect x="849" y="440" width="24.5" height="30.5"/><rect x="874.5" y="440" width="24.5" height="30.5"/><rect x="900.5" y="440" width="24.5" height="30.5"/><rect x="926" y="440" width="24.5" height="30.5"/><rect x="951.5" y="440" width="24.5" height="30.5"/><rect x="977" y="440" width="24.5" height="30.5"/>
<rect x="798" y="472" width="24.5" height="31"/><rect x="823.5" y="472" width="24.5" height="31"/><rect x="849" y="472" width="24.5" height="31"/><rect x="874.5" y="472" width="24.5" height="31"/><rect x="900.5" y="472" width="24.5" height="31"/><rect x="926" y="472" width="24.5" height="31"/><rect x="951.5" y="472" width="24.5" height="31"/><rect x="977" y="472" width="24.5" height="31"/>
</g>
<g fill="#eee">
<circle cx="810" cy="420" r=".3"/><circle cx="835.5" cy="420" r=".5"/><circle cx="861" cy="420" r=".7"/><circle cx="887" cy="420" r="1"/><circle cx="912.7" cy="420" r="1.5"/><circle cx="938" cy="420" r="1.8"/><circle cx="964" cy="420" r="2.2"/><circle cx="989.5" cy="420" r="3.4"/>
<circle cx="810" cy="452.7" r="4"/><circle cx="835.5" cy="452.7" r="5"/><circle cx="861" cy="452.7" r="6.5"/><circle cx="887" cy="452.7" r="8"/><circle cx="912.7" cy="452.7" r="8"/><circle cx="938" cy="452.7" r="8"/><circle cx="964" cy="452.7" r="8"/><circle cx="989.5" cy="452.7" r="8"/>
<circle cx="810" cy="484.5" r="8"/><circle cx="835.5" cy="484.5" r="8"/><circle cx="861" cy="484.5" r="8"/><circle cx="887" cy="484.5" r="8"/><circle cx="912.7" cy="484.5" r="8"/><circle cx="938" cy="484.5" r="8"/><circle cx="964" cy="484.5" r="8"/><circle cx="989.5" cy="484.5" r="8"/>
</g>
<g>
<text class="s" x="810" y="438">1</text><text class="s" x="835.5" y="438">1.5</text><text class="s" x="861" y="438">2</text><text class="s" x="887" y="438">3</text><text class="s" x="912.7" y="438">4</text><text class="s" x="938" y="438">5</text><text class="s" x="964" y="438">7</text><text class="s" x="989.5" y="438">10</text>
<text class="s" x="810" y="470">12</text><text class="s" x="835.5" y="470">15</text><text class="s" x="861" y="470">20</text><text class="s" x="887" y="470">25</text><text class="s" x="912.7" y="470">30</text><text class="s" x="938" y="470">40</text><text class="s" x="964" y="470">50</text><text class="s" x="989.5" y="470">70</text>
<text class="s" x="810" y="502">100</text><text class="s" x="835.5" y="502">150</text><text class="s" x="861" y="502">200</text><text class="s" x="887" y="502">300</text><text class="s" x="912.7" y="502">400</text><text class="s" x="938" y="502">500</text><text class="s" x="964" y="502">700</text><text class="s" x="989.5" y="502">1000</text>
</g>
<rect x="1011" y="408" width="12" height="129" fill="#2a2a2a"/><rect x="1012" y="415" width="11" height="115" rx="3" fill="#6c6c6c"/><path d="M1017.5 410l-2 3h4zM1017.5 535l-2-3h4z" fill="#999"/>

<!-- status -->
<rect y="537" width="1024" height="13" fill="#1f1f1f"/>
<text x="4" y="547" style="font-size:7.5px;fill:#a8a8a8">1600 * 900 pixel</text><text x="61" y="547" style="font-size:7.5px;fill:#a8a8a8">(6.8 * 3.8cm)</text><text x="109" y="547" style="font-size:7.5px;fill:#a8a8a8">600 dpi</text><text x="140" y="547" style="font-size:7.5px;fill:#a8a8a8">100 %</text><text x="165" y="547" style="font-size:7.5px;fill:#a8a8a8">( 1183, 400 )</text>

<!-- taskbar -->
<rect y="550" width="1024" height="26" fill="#1b1b1b"/>
<path d="M10.5 558.6l4.3-.6v4.8h-4.3zM15.6 557.9l5.4-.8v5.7h-5.4zM10.5 563.6h4.3v4.8l-4.3-.6zM15.6 563.6h5.4v5.7l-5.4-.8z" fill="#fff"/>
<rect x="31" y="550" width="220" height="26" fill="#f3f3f3"/>
<circle cx="46" cy="561.5" r="3.5" fill="none" stroke="#333"/><path d="M43.5 564l-3 3.5" stroke="#333"/>
<text x="56.5" y="567" style="font-size:9.4px;fill:#333">Type here to search</text>
<circle cx="266" cy="563" r="4.3" fill="none" stroke="#eee" stroke-width="1.3"/>
<path d="M293 558h7M293 568h7" stroke="#ddd"/><rect x="293.5" y="560" width="6" height="6" fill="none" stroke="#ddd"/><path d="M302 558v10" stroke="#ddd"/>
<path d="M322.5 560h13v11h-13z" fill="#f2f2f2"/><path d="M326 560v-2a3 3 0 0 1 6 0v2" fill="none" stroke="#f2f2f2"/><rect x="325" y="563" width="3" height="3" fill="#e85030"/><rect x="329" y="563" width="3" height="3" fill="#70b030"/><rect x="325" y="567" width="3" height="3" fill="#30a0e8"/><rect x="329" y="567" width="3" height="3" fill="#f0b020"/>
<path d="M353 559h16v12h-16z" fill="#30a4e4"/><path d="M353 559l8 6 8-6z" fill="#eef8ff"/>
<ellipse cx="392" cy="563" rx="6" ry="7.5" fill="none" stroke="#e8141c" stroke-width="3.4"/>
<circle cx="423" cy="563.5" r="6.5" fill="#6cb030"/><circle cx="423" cy="564" r="3" fill="none" stroke="#f0f0f0" stroke-width="1.5"/><path d="M424 557l4 2" stroke="#e8b030" stroke-width="2"/>
<circle cx="455" cy="563" r="6.8" fill="#0090d8"/><text x="455" y="567" class="m" style="font-size:10.5px;font-weight:bold;fill:#fff">S</text>
<rect x="479" y="556" width="14" height="14" rx="4" fill="#2d8cff"/><rect x="482" y="560.5" width="5.5" height="5" rx="1" fill="#fff"/><path d="M488 562.5l2.5-1.5v4l-2.5-1.5z" fill="#fff"/>
<path d="M517 555c3 4 5.5 7 5.5 10a5.5 5.5 0 0 1-11 0c0-3 2.5-6 5.5-10z" fill="url(#drop)"/>
<rect x="534" y="550" width="30" height="26" fill="#444"/>
<rect x="542.5" y="556.5" width="14" height="14" rx="3" fill="#f0f0f0"/><circle cx="549.5" cy="563.5" r="5" fill="#3fa46a"/><path d="M545 561a5 5 0 0 1 9 0z" fill="#e05050"/><circle cx="551" cy="565" r="2.5" fill="#3a90e0"/>
<path d="M379 575h22M410 575h22M442 575h22M473 575h22M505 575h22M534 575h30" stroke="#7ab4dc" stroke-width="1"/>
<path d="M838 565l4-4 4 4" fill="none" stroke="#ddd" stroke-width="1.1"/>
<rect x="854" y="556" width="4.5" height="9" rx="2" fill="#e4e4e4"/><path d="M856 566v3" stroke="#aaa" stroke-width="1.5"/>
<rect x="869" y="560" width="8" height="5" fill="#e4e4e4"/><path d="M867 561l2-2" stroke="#e4e4e4"/>
<path d="M884 568l2-3 2-2 3-2v7z" fill="#888"/>
<path d="M898 561h2l3-2.5v10l-3-2.5h-2z" fill="none" stroke="#ddd" stroke-width=".9"/><path d="M905 561c1 1 1 4 0 5M907 559.5c1.5 2 1.5 6 0 8" fill="none" stroke="#ddd" stroke-width=".8"/>
<rect x="915" y="560" width="6" height="7" rx="1" fill="none" stroke="#ddd" stroke-width=".9"/><path d="M916 558h4M916 569h4" stroke="#ddd"/>
<text x="938" y="566" class="m" style="font-size:7.5px;fill:#ddd">VIE</text>
<text x="969" y="560" class="m" style="font-size:7.5px;fill:#e4e4e4">3:47 PM</text>
<text x="969" y="572" class="m" style="font-size:7.5px;fill:#e4e4e4">9/23/2021</text>
<path d="M998.5 558.5h10v9h-3l-2 2-2-2h-3z" fill="none" stroke="#ddd"/>
</svg>

<!-- colour wheel -->
<div class="d" style="left:66px;top:64px;width:106px;height:106px;border-radius:50%;background:conic-gradient(from 95deg,#f00,#ff0,#0f0,#0ff,#00f,#f0f,#f00)"></div>
<div class="d" style="left:78px;top:76px;width:82px;height:82px;border-radius:50%;background:#232323"></div>
<div class="d" style="left:90px;top:88px;width:58px;height:58px;background:linear-gradient(to top,#000,rgba(0,0,0,0)),linear-gradient(to right,#fff,#e01818)"></div>
<div class="d" style="left:90px;top:88px;width:5px;height:5px;border:1px solid #999;border-radius:50%;box-sizing:border-box"></div>
<div class="d" style="left:161px;top:114px;width:10px;height:10px;border:2px solid #fff;border-radius:50%;box-sizing:border-box"></div>
</body></html>
